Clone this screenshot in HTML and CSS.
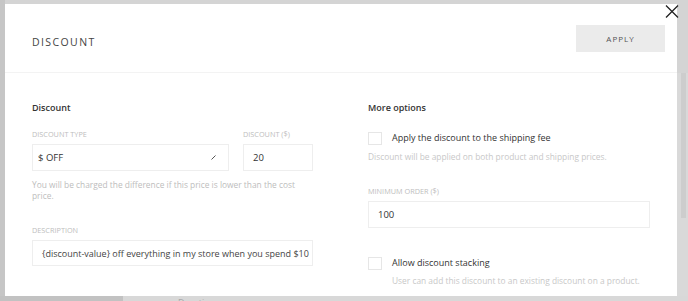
FILE: index.html
```html
<!DOCTYPE html>
<html lang="en">
<head>
    <meta charset="UTF-8">
    <meta name="viewport" content="width=device-width, initial-scale=1.0">
    <title>Discount</title>
    <link rel="stylesheet" href="styles.css">
</head>
<body>
<div class="overlay">
    <div class="modal">
        <div class="modal-header">
            <h1>Discount</h1>
            <button type="button" class="apply-button">Apply</button>
        </div>
        <div class="modal-body">
            <div class="column">
                <h2>Discount</h2>
                <div class="field-row">
                    <div class="form-group grow">
                        <label>Discount type</label>
                        <div class="select-box">
                            <span>$ OFF</span>
                            <svg class="select-arrow" width="5" height="5" viewBox="0 0 5 5">
                                <path d="M0.5 4.5 L4.5 0.5" stroke="#555" stroke-width="1" />
                            </svg>
                        </div>
                    </div>
                    <div class="form-group amount">
                        <label>Discount ($)</label>
                        <div class="text-box">20</div>
                    </div>
                </div>
                <p class="help">You will be charged the difference if this price is lower than the cost price.</p>
                <div class="form-group description">
                    <label>Description</label>
                    <div class="text-box clip">{discount-value} off everything in my store when you spend $10</div>
                </div>
            </div>
            <div class="column">
                <h2>More options</h2>
                <div class="check-row">
                    <span class="checkbox"></span>
                    <span class="check-label">Apply the discount to the shipping fee</span>
                </div>
                <p class="help tight">Discount will be applied on both product and shipping prices.</p>
                <div class="form-group min-order">
                    <label>Minimum order ($)</label>
                    <div class="text-box">100</div>
                </div>
                <div class="check-row stacking">
                    <span class="checkbox"></span>
                    <span class="check-label">Allow discount stacking</span>
                </div>
                <p class="help indent">User can add this discount to an existing discount on a product.</p>
            </div>
        </div>
    </div>
    <div class="scroll-track"><div class="scroll-thumb"></div></div>
</div>
<div class="footer-strip"><span>Duration</span></div>
<button type="button" class="close-button" aria-label="Close">
    <svg width="14" height="13" viewBox="0 0 14 13">
        <path d="M1 0.5 L13 12.5 M13 0.5 L1 12.5" stroke="#222" stroke-width="1.3" fill="none" />
    </svg>
</button>
</body>
</html>
```

FILE: styles.css
```css
body {
    margin: 0;
    width: 688px;
    height: 301px;
    overflow: hidden;
    background-color: #d4d4d4;
    font-family: "Open Sans", sans-serif;
    color: #333;
}

.overlay {
    display: flex;
    padding: 4px 0 0 5px;
    height: 292px;
    background: linear-gradient(to right, #c6c6c6 0, #c6c6c6 5px, transparent 5px);
}

.modal {
    width: 672px;
    background-color: #fff;
    display: flex;
    flex-direction: column;
}

.modal-header {
    height: 69px;
    box-sizing: border-box;
    border-bottom: 1px solid #f3f3f3;
    display: flex;
    align-items: flex-start;
    justify-content: space-between;
    padding: 21px 12px 0 27px;
}

h1 {
    margin: 9px 0 0;
    font-size: 10.5px;
    font-weight: 400;
    letter-spacing: 1.4px;
    text-transform: uppercase;
    color: #444;
    line-height: 16px;
}

.apply-button {
    width: 89px;
    height: 27px;
    border: none;
    background-color: #ebebeb;
    color: #555;
    font-family: "Open Sans", sans-serif;
    font-size: 8px;
    letter-spacing: 1px;
    text-transform: uppercase;
    padding: 0;
}

.modal-body {
    display: flex;
    gap: 55px;
    padding: 27px 27px 0;
}

.column {
    width: 281px;
    flex: none;
}

.column + .column {
    width: 282px;
}

h2 {
    margin: 0;
    font-size: 9px;
    font-weight: 600;
    line-height: 16px;
    color: #333;
}

.field-row {
    display: flex;
    gap: 14px;
    margin-top: 12px;
}

.grow {
    flex: 1;
}

.amount {
    width: 70px;
}

label {
    display: block;
    font-size: 7.3px;
    line-height: 12px;
    text-transform: uppercase;
    color: #bdbdbd;
    margin-bottom: 4px;
}

.select-box, .text-box {
    height: 27px;
    box-sizing: border-box;
    border: 1px solid #eeeeee;
    font-size: 9.5px;
    line-height: 25px;
    color: #333;
    display: flex;
    align-items: center;
    justify-content: space-between;
}

.select-box {
    padding: 0 12px 0 5px;
}

.text-box {
    padding: 0 9px;
}

.clip {
    white-space: nowrap;
    overflow: hidden;
    justify-content: flex-start;
    height: 26px;
    font-size: 9px;
    color: #444;
}

.select-arrow {
    display: block;
}

.help {
    margin: 8px 0 0;
    font-size: 8.4px;
    line-height: 11px;
    color: #bdbdbd;
}

.description {
    margin-top: 23px;
}

.check-row {
    display: flex;
    align-items: center;
    gap: 10px;
    margin-top: 14px;
}

.checkbox {
    width: 14px;
    height: 13px;
    box-sizing: border-box;
    border: 1px solid #e6e6e6;
    flex: none;
}

.check-label {
    font-size: 9px;
    color: #333;
    line-height: 16px;
}

.tight {
    margin-top: 5px;
    color: #c8c8c8;
}

.min-order {
    margin-top: 23px;
}

.stacking {
    margin-top: 27px;
}

.indent {
    margin-top: 4px;
    padding-left: 24px;
    color: #c8c8c8;
}

.scroll-track {
    width: 11px;
    margin-top: 69px;
    background-color: #d9d9d9;
}

.scroll-thumb {
    margin: 0 2px 0 4px;
    height: 145px;
    background-color: #cdcdcd;
}

.footer-strip {
    height: 5px;
    overflow: hidden;
    background: linear-gradient(to right, #c2c2c2 0, #c2c2c2 123px, #d8d8d8 123px);
    padding-left: 178px;
    font-size: 9px;
    line-height: 12px;
    color: #a8a8a8;
}

.footer-strip span {
    display: block;
    margin-top: 1px;
}

.close-button {
    position: absolute;
    top: 5px;
    left: 665px;
    padding: 0;
    border: none;
    background: none;
    line-height: 0;
}
```
